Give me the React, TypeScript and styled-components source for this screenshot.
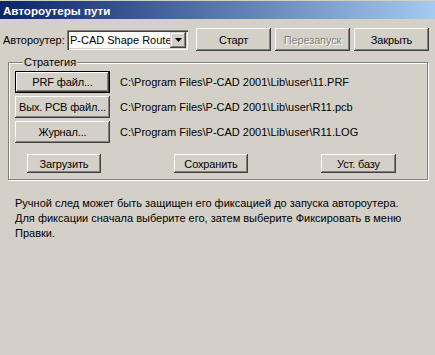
import React from "react";
import styled, { createGlobalStyle, css } from "styled-components";

const GlobalStyle = createGlobalStyle`
  html, body {
    margin: 0;
    padding: 0;
    background: #d4d0c8;
  }
  body {
    font-family: "Liberation Sans", Arial, sans-serif;
    font-size: 11px;
    color: #000;
  }
`;

const Window = styled.div`
  width: 435px;
  height: 355px;
  padding-top: 1px;
  box-sizing: border-box;
  background: #d4d0c8;
  overflow: hidden;
`;

const TitleBar = styled.div`
  height: 18px;
  display: flex;
  align-items: center;
  padding-left: 3px;
  background: linear-gradient(to right, #0a246a, #a6caf0);
  color: #fff;
  font-weight: bold;
  font-size: 11.6px;
`;

const Toolbar = styled.div`
  display: flex;
  align-items: center;
  height: 23px;
  margin-top: 9px;
  padding-left: 3px;
`;

const Label = styled.span`
  width: 64px;
  white-space: nowrap;
`;

const Select = styled.div`
  width: 121px;
  height: 20px;
  box-sizing: border-box;
  display: flex;
  align-items: center;
  background: #fff;
  padding: 2px;
  box-shadow: inset 1px 1px #808080, inset 2px 2px #404040,
    inset -1px -1px #fff, inset -2px -2px #d4d0c8;
`;

const SelectValue = styled.span`
  flex: 1;
  padding-left: 1px;
  overflow: hidden;
  white-space: nowrap;
`;

const DropButton = styled.div`
  width: 16px;
  height: 16px;
  display: flex;
  align-items: center;
  justify-content: center;
  background: #d4d0c8;
  box-shadow: inset -1px -1px #404040, inset 1px 1px #d4d0c8,
    inset -2px -2px #808080, inset 2px 2px #fff;
`;

const ToolButtons = styled.div`
  display: flex;
  gap: 4px;
  margin-left: 8px;
`;

const Button = styled.button<{ $w: number; $h?: number; $default?: boolean }>`
  width: ${(p) => p.$w}px;
  height: ${(p) => p.$h ?? 23}px;
  padding: 0;
  margin: 0;
  border: none;
  background: #d4d0c8;
  font: inherit;
  letter-spacing: -0.15px;
  color: #000;
  white-space: nowrap;
  box-shadow: inset -1px -1px #404040, inset 1px 1px #fff,
    inset -2px -2px #808080, inset 2px 2px #d4d0c8;
  ${(p) =>
    p.$default &&
    css`
      box-shadow: inset 0 0 0 1px #000, inset -2px -2px #404040,
        inset 2px 2px #fff, inset -3px -3px #808080;
    `}
  &:disabled {
    color: #808080;
    text-shadow: 1px 1px 0 #fff;
  }
`;

const Group = styled.fieldset`
  margin: 5px 7px 0 8px;
  padding: 2px 6px 6px 6px;
  border: 1px solid #808080;
  box-shadow: inset 1px 1px 0 #fff, 1px 1px 0 #fff;
  display: flex;
  flex-direction: column;
  gap: 3px;
`;

const Legend = styled.legend`
  margin-left: 8px;
  padding: 0 1px;
  background: #d4d0c8;
  line-height: 13px;
`;

const FileRow = styled.div`
  display: flex;
  align-items: center;
  gap: 10px;
  white-space: nowrap;
`;

const ActionRow = styled.div`
  display: flex;
  gap: 73px;
  padding-left: 12px;
  margin-top: 8px;
`;

const Note = styled.p`
  margin: 16px 0 0 15px;
  line-height: 15px;
  white-space: nowrap;
`;

const files = [
  { label: "PRF файл...", path: "C:\\Program Files\\P-CAD 2001\\Lib\\user\\11.PRF", def: true },
  { label: "Вых. PCB файл...", path: "C:\\Program Files\\P-CAD 2001\\Lib\\user\\R11.pcb" },
  { label: "Журнал...", path: "C:\\Program Files\\P-CAD 2001\\Lib\\user\\R11.LOG" },
];

export default function App() {
  return (
    <>
      <GlobalStyle />
      <Window>
        <TitleBar>Автороутеры пути</TitleBar>
        <Toolbar>
          <Label>Автороутер:</Label>
          <Select>
            <SelectValue>P-CAD Shape Route</SelectValue>
            <DropButton>
              <svg width="7" height="4" viewBox="0 0 7 4">
                <path d="M0 0h7L3.5 4z" fill="#000" />
              </svg>
            </DropButton>
          </Select>
          <ToolButtons>
            <Button $w={75}>Старт</Button>
            <Button $w={75} disabled>
              Перезапуск
            </Button>
            <Button $w={75}>Закрыть</Button>
          </ToolButtons>
        </Toolbar>
        <Group>
          <Legend>Стратегия</Legend>
          {files.map((f) => (
            <FileRow key={f.label}>
              <Button $w={95} $h={22} $default={f.def}>
                {f.label}
              </Button>
              <span>{f.path}</span>
            </FileRow>
          ))}
          <ActionRow>
            <Button $w={74} $h={19}>Загрузить</Button>
            <Button $w={74} $h={19}>Сохранить</Button>
            <Button $w={75} $h={19}>Уст. базу</Button>
          </ActionRow>
        </Group>
        <Note>
          Ручной след может быть защищен его фиксацией до запуска автороутера.
          <br />
          Для фиксации сначала выберите его, затем выберите Фиксировать в меню
          <br />
          Правки.
        </Note>
      </Window>
    </>
  );
}
